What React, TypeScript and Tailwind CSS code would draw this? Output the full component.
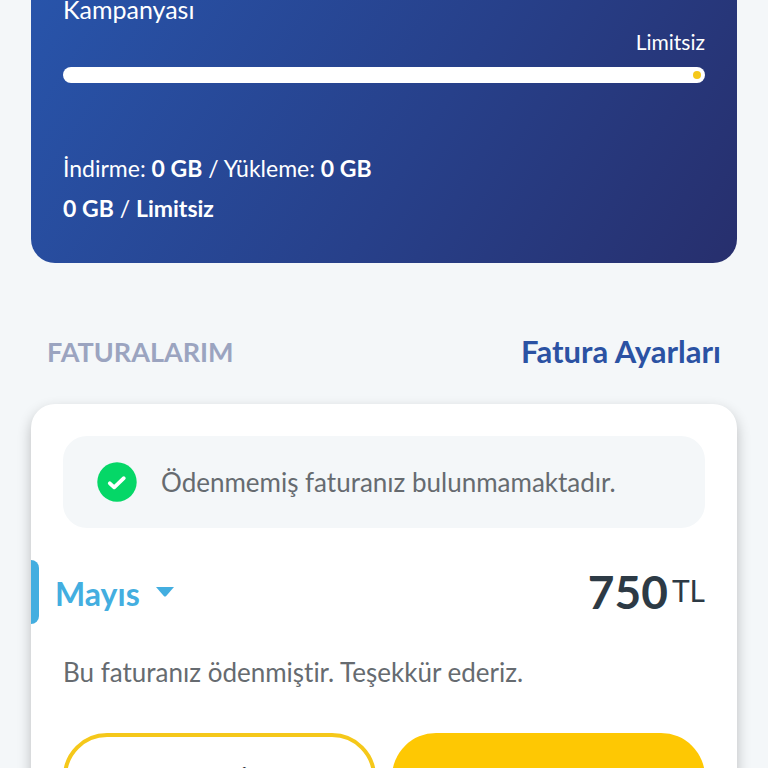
import React from 'react';

const UsageCard: React.FC = () => (
    <section className="rounded-b-3xl bg-[linear-gradient(122deg,#2854aa,#27408a_55%,#272f6d)] px-8 pb-[35px] text-white">
        <h2 className="text-[25px] leading-[18px]">Kampanyası</h2>
        <p className="mt-3 text-right text-[21px] leading-6">Limitsiz</p>
        <div role="progressbar" aria-label="Limitsiz" aria-valuenow={0} className="mt-[13px] flex h-4 items-center justify-end rounded-full bg-white px-1">
            <span className="size-2 rounded-full bg-[#f5c81a]" />
        </div>
        <div className="mt-[65px] text-[23px] leading-10">
            <p>İndirme: <b>0 GB</b> / Yükleme: <b>0 GB</b></p>
            <p><b>0 GB</b> / <b>Limitsiz</b></p>
        </div>
    </section>
);

const CheckIcon: React.FC = () => (
    <svg viewBox="0 0 40 40" className="size-10 shrink-0" aria-hidden="true">
        <circle cx="20" cy="20" r="19.7" fill="#05d767" />
        <path d="M12.8 21.3 17.2 25.3 26.8 16.2" fill="none" stroke="#fff" strokeWidth="3.8" strokeLinecap="round" strokeLinejoin="round" />
    </svg>
);

const InvoiceCard: React.FC = () => (
    <section className="rounded-t-3xl bg-white pt-8 shadow-[0_6px_14px_rgba(0,0,0,0.24)]">
        <div className="mx-8 flex items-center gap-6 rounded-3xl bg-[#f4f7f9] px-[34px] py-[26px]">
            <CheckIcon />
            <p className="text-[26px] leading-10 text-[#666b70]">Ödenmemiş faturanız bulunmamaktadır.</p>
        </div>

        <div className="mt-8 flex items-center justify-between pr-8">
            <div className="flex items-center">
                <span className="h-16 w-2 rounded-r-lg bg-[#43aee0]" />
                <label className="ml-4 flex items-center gap-4 text-[#43aee0]">
                    <select aria-label="Fatura" className="appearance-none bg-transparent pt-1 text-[32px] leading-10 font-bold">
                        <option>Mayıs</option>
                    </select>
                    <svg viewBox="0 0 18 10" className="h-[10px] w-[18px]" aria-hidden="true">
                        <path d="M0 0H18L10.2 8.9Q9 10 7.8 8.9Z" fill="currentColor" />
                    </svg>
                </label>
            </div>
            <p className="flex items-start gap-1 text-[#2d3a45]">
                <span className="text-[46px] leading-[64px] font-bold">750</span>
                <span className="text-[30px] leading-[60px]">TL</span>
            </p>
        </div>

        <p className="mt-8 px-8 text-[26px] leading-8 text-[#666b70]">Bu faturanız ödenmiştir. Teşekkür ederiz.</p>

        <div className="mt-[45px] grid grid-cols-2 gap-4 px-8 pb-8">
            <button className="h-24 rounded-[44px] border-4 border-[#f5c81a] text-2xl font-bold text-[#1f2933]">Faturayı İndir</button>
            <button aria-label="Fatura" className="h-24 rounded-[44px] bg-[#fec803]" />
        </div>
    </section>
);

const App: React.FC = () => {
    return (
        <main className="h-screen overflow-hidden bg-[#f4f7f9] px-[31px] font-['Lato',sans-serif] [font-variant-ligatures:none]">
            <UsageCard />
            <div className="mt-[66px] mb-[30px] flex items-center justify-between px-4 leading-[45px] font-bold">
                <h2 className="text-[27px] text-[#9ba4c0]">FATURALARIM</h2>
                <a href="#fatura-ayarlari" className="text-[31px] text-[#2b52a3]">Fatura Ayarları</a>
            </div>
            <InvoiceCard />
        </main>
    );
};

export default App;
